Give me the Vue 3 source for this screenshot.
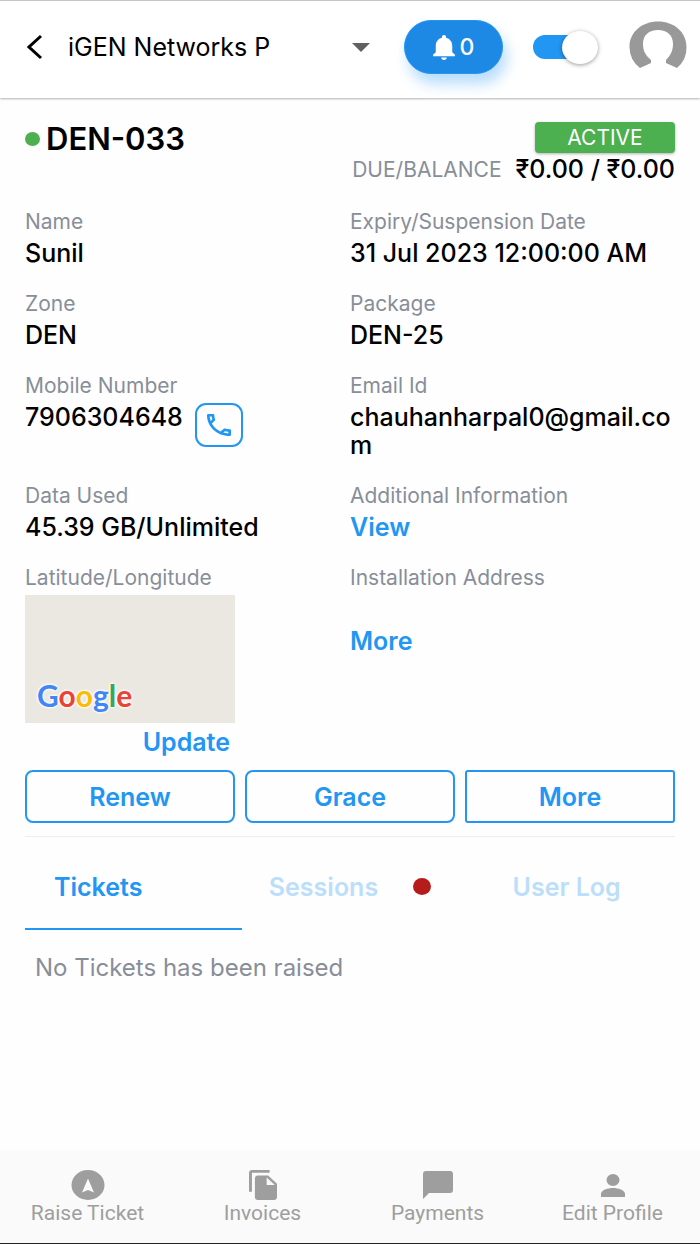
<script setup>
import { ref } from 'vue'

const online = ref(true)
const network = ref('iGEN Networks P')
const activeTab = ref('tickets')
const tabs = [
  { id: 'tickets', label: 'Tickets' },
  { id: 'sessions', label: 'Sessions', dot: true },
  { id: 'log', label: 'User Log' },
]
</script>

<template>
  <div class="page">
    <header class="topbar">
      <button class="plain back" type="button" aria-label="Back">
        <svg width="16" height="26" viewBox="0 0 16 26"><path d="M14 2 2 13l12 11" fill="none" stroke="#000" stroke-width="3" /></svg>
      </button>
      <div class="picker">
        <select v-model="network" aria-label="Network">
          <option>iGEN Networks P</option>
        </select>
        <svg class="caret" width="18" height="9" viewBox="0 0 18 9"><path d="M0 0h18L9 9z" fill="#616161" /></svg>
      </div>
      <button class="alerts" type="button" aria-label="Notifications: 0">
        <svg width="22" height="25" viewBox="4 2.5 16 19.5" preserveAspectRatio="none"><path d="M12 22c1.1 0 2-.9 2-2h-4c0 1.1.9 2 2 2zm6-6v-5c0-3.07-1.63-5.64-4.5-6.32V4c0-.83-.67-1.5-1.5-1.5s-1.5.67-1.5 1.5v.68C7.64 5.36 6 7.92 6 11v5l-2 2v1h16v-1l-2-2z" fill="#fff" /></svg>
        <span>0</span>
      </button>
      <label class="toggle">
        <input v-model="online" type="checkbox" aria-label="Online" />
        <span class="track"></span>
        <span class="thumb"></span>
      </label>
      <button class="plain avatar" type="button" aria-label="Account">
        <svg width="58" height="52" viewBox="0 0 58 52"><path d="M11 47A28 27 0 0 1 .5 26C.5 11 13 .5 29 .5S57.500 11 57.500 26A28 27 0 0 1 48 47L37 42V39C42 34 44 29 44 23C44 14 38 9 29 9S14 14 14 23C14 29 16 34 22 39V42Z" fill="#999" /></svg>
      </button>
    </header>

    <main class="content">
      <section class="summary">
        <h1><i class="status-dot"></i>DEN-033</h1>
        <div class="account">
          <span class="status">ACTIVE</span>
          <p class="balance"><span class="label">DUE/BALANCE</span><strong>₹0.00 / ₹0.00</strong></p>
        </div>
      </section>

      <dl class="details">
        <div><dt>Name</dt><dd>Sunil</dd></div>
        <div><dt>Expiry/Suspension Date</dt><dd>31 Jul 2023 12:00:00 AM</dd></div>
        <div><dt>Zone</dt><dd>DEN</dd></div>
        <div><dt>Package</dt><dd>DEN-25</dd></div>
        <div>
          <dt>Mobile Number</dt>
          <dd class="phone">
            7906304648
            <button class="call" type="button" aria-label="Call">
              <svg width="24" height="22" viewBox="3 3 18 18" preserveAspectRatio="none"><path d="M6.540 5c.06.89.21 1.760.45 2.590l-1.200 1.200c-.41-1.200-.67-2.470-.76-3.790h1.510m9.860 12.020c.85.24 1.720.39 2.600.45v1.490c-1.320-.09-2.590-.35-3.800-.75l1.200-1.190M7.500 3H4c-.55 0-1 .45-1 1 0 9.390 7.610 17 17 17 .55 0 1-.45 1-1v-3.490c0-.55-.45-1-1-1-1.240 0-2.450-.2-3.570-.57-.1-.04-.21-.05-.31-.05-.26 0-.51.1-.71.290l-2.200 2.200c-2.830-1.450-5.150-3.760-6.590-6.590l2.200-2.200c.28-.28.36-.67.25-1.020C8.700 6.450 8.500 5.250 8.500 4c0-.55-.45-1-1-1z" fill="#2196f3" /></svg>
            </button>
          </dd>
        </div>
        <div><dt>Email Id</dt><dd>chauhanharpal0@gmail.com</dd></div>
        <div><dt>Data Used</dt><dd>45.39 GB/Unlimited</dd></div>
        <div><dt>Additional Information</dt><dd><a href="#info">View</a></dd></div>
        <div>
          <dt>Latitude/Longitude</dt>
          <dd class="location">
            <div class="map">
              <span class="brand"><b class="blue">G</b><b class="red">o</b><b class="yellow">o</b><b class="blue">g</b><b class="green">l</b><b class="red">e</b></span>
            </div>
            <a href="#location">Update</a>
          </dd>
        </div>
        <div><dt>Installation Address</dt><dd class="address"><a href="#address">More</a></dd></div>
      </dl>

      <div class="actions">
        <button type="button">Renew</button>
        <button type="button">Grace</button>
        <button class="square" type="button">More</button>
      </div>

      <div class="tabs" role="tablist">
        <button
          v-for="tab in tabs"
          :key="tab.id"
          type="button"
          role="tab"
          :class="[tab.id, { active: activeTab === tab.id }]"
          :aria-selected="activeTab === tab.id"
          @click="activeTab = tab.id"
        >
          {{ tab.label }}<i v-if="tab.dot" class="tab-dot"></i>
        </button>
      </div>
      <p class="empty">No Tickets has been raised</p>
    </main>

    <nav class="bottom">
      <a href="#raise">
        <svg width="34" height="30" viewBox="0 0 34 30"><ellipse cx="17" cy="15" rx="16.500" ry="15" fill="#9e9e9e" /><path d="M17 8.500 23 22.500 17 20 11 22.500Z" fill="#fafafa" /></svg>
        <span>Raise Ticket</span>
      </a>
      <a href="#invoices">
        <svg width="28" height="30" viewBox="2 1 19 22" preserveAspectRatio="none"><path d="M16 1H4c-1.100 0-2 .9-2 2v14h2V3h12V1zm-1 4 6 6v10c0 1.100-.9 2-2 2H7.990C6.890 23 6 22.100 6 21l.01-14c0-1.100.89-2 1.990-2h7zm-1 7h5.500L14 6.500V12z" fill="#9e9e9e" /></svg>
        <span>Invoices</span>
      </a>
      <a href="#payments">
        <svg width="30" height="30" viewBox="0 0 30 30"><path d="M3 1h24a3 3 0 0 1 3 3v16a3 3 0 0 1-3 3H6l-6 6V4a3 3 0 0 1 3-3Z" fill="#9e9e9e" /></svg>
        <span>Payments</span>
      </a>
      <a href="#profile">
        <svg width="26" height="30" viewBox="0 0 26 30"><ellipse cx="13" cy="10" rx="6.500" ry="6" fill="#9e9e9e" /><path d="M1 27v-3c0-4 7-6 12-6s12 2 12 6v3Z" fill="#9e9e9e" /></svg>
        <span>Edit Profile</span>
      </a>
    </nav>
  </div>
</template>

<style>
body { margin: 0; background: #fefefe; }
</style>

<style scoped>
* { box-sizing: border-box; }
.page {
  min-height: 100vh;
  display: flex;
  flex-direction: column;
  font: 500 25px/28px Inter, Roboto, sans-serif;
  color: #000;
}
button, select { font: inherit; color: inherit; background: none; border: 0; padding: 0; }
svg { display: block; flex: none; }
a { color: #2196f3; text-decoration: none; }
p, h1, dl, dd { margin: 0; }

.topbar {
  height: 98px;
  display: flex;
  align-items: center;
  padding: 0 13px 5px 27px;
  background: #fff;
  border-top: 1px solid #c4c4c4;
  box-shadow: 0 1px 2px rgba(0, 0, 0, 0.3);
}
.back { margin-right: 25px; }
.picker { flex: 1; display: flex; align-items: center; font-weight: 400; }
.picker select { flex: 1; min-width: 0; appearance: none; outline: 0; line-height: 32px; }
.caret { pointer-events: none; }
.alerts {
  width: 99px;
  height: 54px;
  margin: 0 30px 0 34px;
  display: flex;
  align-items: center;
  justify-content: center;
  gap: 5px;
  border: 1px solid #2196f3;
  border-radius: 27px;
  background: #1e88e5;
  color: #fff;
  font-size: 23px;
  box-shadow: 4px 10px 14px rgba(33, 150, 243, 0.32);
}
.toggle { width: 66px; height: 36px; display: flex; align-items: center; position: relative; margin-right: 30px; }
.toggle input { position: absolute; inset: 0; width: 100%; height: 100%; margin: 0; opacity: 0; }
.track { width: 54px; height: 24px; border-radius: 12px; background: #2196f3; }
.thumb {
  position: absolute;
  right: 1px;
  width: 36px;
  height: 33px;
  border-radius: 50%;
  background: #fff;
  box-shadow: 0 1px 4px rgba(0, 0, 0, 0.4);
  pointer-events: none;
}

.content { flex: 1; padding: 24px 25px; }
.summary { display: flex; justify-content: space-between; align-items: flex-start; margin-bottom: 22px; }
h1 { display: flex; align-items: center; gap: 6px; font-size: 31px; line-height: 34px; font-weight: 600; }
.status-dot { width: 15px; height: 14px; border-radius: 50%; background: #4caf50; }
.account { display: flex; flex-direction: column; align-items: flex-end; }
.status {
  width: 140px;
  height: 31px;
  text-align: center;
  font-size: 21px;
  font-weight: 400;
  line-height: 31px;
  color: #fff;
  background: #4caf50;
  border-radius: 4px;
  box-shadow: 0 1px 3px rgba(0, 0, 0, 0.3);
}
.balance { display: flex; align-items: center; gap: 14px; line-height: 33px; }
.label, dt { font-size: 21px; font-weight: 400; color: #888e99; }
strong { font-weight: 500; }

.details { display: grid; grid-template-columns: 1fr 1fr; row-gap: 23px; }
.details > div { min-width: 0; }
dt { margin-bottom: 3px; }
dd { overflow-wrap: anywhere; }
.phone { display: flex; gap: 12px; height: 28px; }
.call {
  width: 48px;
  height: 44px;
  display: grid;
  place-items: center;
  border: 2px solid #2196f3;
  border-radius: 11px;
}
.location { width: 210px; text-align: right; }
.location a { margin-right: 5px; }
.map { display: flex; align-items: flex-end; height: 128px; margin-bottom: 5px; padding: 0 12px 10px; background: #ebe8e1; }
.brand {
  font: 30px/36px Lato, sans-serif;
  text-shadow: 0 0 3px #fff, 0 0 3px #fff, 0 0 3px #fff;
}
.brand b { font-weight: 700; }
.blue { color: #4285f4; }
.red { color: #ea4335; }
.yellow { color: #fbbc05; }
.green { color: #34a853; }
.address { padding-top: 32px; }
.details a { font-weight: 600; }

.actions { display: grid; grid-template-columns: repeat(3, 1fr); gap: 10px; margin-top: 14px; padding-bottom: 13px; border-bottom: 1px solid #eee; }
.actions button { height: 53px; border: 2px solid #2196f3; border-radius: 8px; color: #2196f3; font-weight: 600; }
.actions .square { border-radius: 3px; }

.tabs { display: grid; grid-template-columns: repeat(3, 1fr); margin-top: 8px; }
.tabs button {
  height: 85px;
  display: flex;
  align-items: center;
  justify-content: center;
  gap: 35px;
  border-bottom: 2px solid transparent;
  color: #bbdefb;
  font-weight: 600;
}
.tabs .tickets { justify-content: flex-start; padding-left: 29px; }
.tabs .active { color: #2196f3; border-color: #2196f3; }
.tab-dot { width: 18px; height: 17px; border-radius: 50%; background: #b71c1c; }
.empty { padding: 24px 10px; font-size: 24px; font-weight: 400; color: #888e99; }

.bottom {
  display: grid;
  grid-template-columns: repeat(4, 1fr);
  height: 94px;
  padding-top: 20px;
  background: #fafafa;
  border-bottom: 1px solid #222;
}
.bottom a { display: flex; flex-direction: column; align-items: center; font: 21px/26px Roboto, sans-serif; color: #9e9e9e; }
</style>
